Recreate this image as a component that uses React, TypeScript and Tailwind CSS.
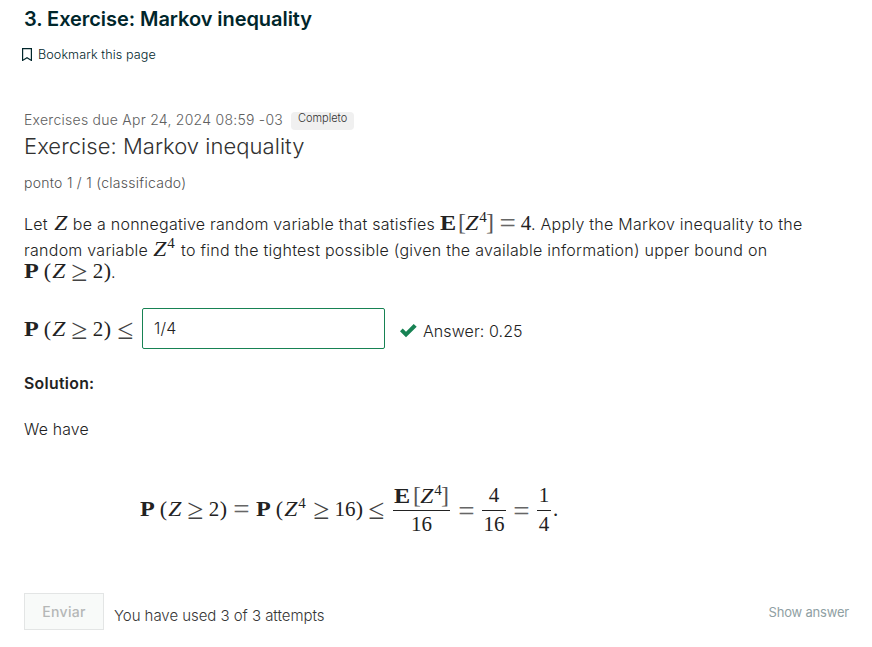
import type { ReactNode } from "react";

// One math glyph, centred in a box of fixed width and aligned on the baseline.
function G({ c, children }: { c: string; children: ReactNode }) {
  return (
    <span className={`inline-flex shrink-0 justify-center whitespace-nowrap ${c}`}>
      {children}
    </span>
  );
}

const serif = "font-['Liberation_Serif',serif] font-normal text-[#222] leading-none tracking-normal";
const Bold = ({ c }: { c: string }) => (
  <G c="w-[15px] text-[21px] font-bold"><span className="inline-block scale-x-[1.15]">{c}</span></G>
);
const Z = () => (
  <G c="w-[14px] text-[21px] italic"><span className="inline-block scale-x-[1.12]">Z</span></G>
);
const Rel = ({ c }: { c: string }) => <G c="w-[15px] text-[29px] leading-[16px] translate-y-[3px] text-[#444]">{c}</G>;
const Eq = () => <G c="w-[15px] text-[29px] leading-[16px] translate-y-[3px] text-[#666]">=</G>;
const Sup = () => <G c="w-[8px] text-[15px] leading-[12px] -translate-y-[8px]">4</G>;
const Paren = ({ c }: { c: string }) => <G c="w-[7px] text-[22px]">{c}</G>;

function PZ() {
  return (
    <span className={`inline-flex h-6 items-baseline ${serif}`}>
      <Bold c="P" />
      <span className="ml-[5px] inline-flex"><Paren c="(" /></span>
      <span className="ml-[1px] inline-flex"><Z /></span>
      <span className="ml-[6px] inline-flex"><Rel c="≥" /></span>
      <G c="ml-[6px] mr-[1px] w-[10px] text-[21px]">2</G>
      <Paren c=")" />
    </span>
  );
}

function EZ() {
  return (
    <span className={`inline-flex h-6 items-baseline ${serif}`}>
      <Bold c="E" />
      <G c="ml-1 w-[6px] text-[24px] text-[#555]">[</G>
      <Z />
      <Sup />
      <G c="w-[6px] text-[24px] text-[#555]">]</G>
    </span>
  );
}

function Fraction({ c, top, bottom }: { c: string; top: ReactNode; bottom: ReactNode }) {
  return (
    <span className={`flex shrink-0 flex-col items-center ${c}`}>
      <span className="flex h-[30px] items-center text-[21px]">{top}</span>
      <span className="h-px w-full bg-[#222]" />
      <span className="flex h-[26px] items-center text-[21px]">{bottom}</span>
    </span>
  );
}

export default function App() {
  return (
    <main className="flex h-[647px] w-[872px] flex-col overflow-hidden bg-white pl-6 font-['Inter',sans-serif] font-[350] text-[#222]">
      <h2 className="mt-[5px] h-7 text-[20px] leading-7 font-semibold tracking-[-0.06px] text-[#00262b]">
        3. Exercise: Markov inequality
      </h2>
      <div className="-ml-[2px] mt-[12px] flex h-5 items-center text-[12.6px] tracking-[0.09px] text-[#00262b]">
        <svg className="-mt-px" width="10" height="13" viewBox="0 0 10 13" fill="none" stroke="#00262b" strokeWidth="1.2">
          <path d="M.6.6h8.8v11.8L5 9.8.6 12.4z" />
        </svg>
        <span className="ml-[6px]">Bookmark this page</span>
      </div>

      <div className="mt-[44px] flex h-5 items-center text-[14px] tracking-[0.26px] text-[#606060]">
        <span>Exercises due Apr 24, 2024 08:59 -03</span>
        <span className="ml-2 mt-[3px] h-[18px] w-[63px] rounded bg-[#f0f0f0] text-center text-[11px] leading-[13px] tracking-normal text-[#333]">
          Completo
        </span>
      </div>
      <h3 className="mt-px h-8 text-[22px] leading-8 font-light tracking-[0.04px] text-[#313131]">
        Exercise: Markov inequality
      </h3>
      <div className="mt-[11px] h-5 text-[14px] leading-5 tracking-[0.27px] text-[#505050]">ponto 1 / 1 (classificado)</div>

      <p className="mt-[17px] flex h-6 items-baseline text-[16px] leading-6 tracking-[0.25px] whitespace-nowrap">
        <span>Let</span>
        <span className={`ml-[6px] ${serif}`}><Z /></span>
        <span className="ml-[5px]">be a nonnegative random variable that satisfies</span>
        <span className="ml-[5px]"><EZ /></span>
        <span className={`ml-[7px] inline-flex items-baseline ${serif}`}>
          <Eq />
          <G c="ml-[6px] w-[10px] text-[21px]">4</G>
        </span>
        <span>. Apply the Markov inequality to the</span>
      </p>
      <p className="mt-[4px] flex h-6 items-baseline text-[16px] leading-6 tracking-[0.26px] whitespace-nowrap">
        <span>random variable</span>
        <span className={`ml-[5px] inline-flex items-baseline ${serif}`}><Z /><Sup /></span>
        <span className="ml-[6px]">to find the tightest possible (given the available information) upper bound on</span>
      </p>
      <p className="-mt-[2px] flex h-6 items-baseline text-[16px] leading-6">
        <PZ />
        <span>.</span>
      </p>

      <div className="mt-[24px] flex h-[41px] items-center text-[16px]">
        <span className={`mt-[2px] inline-flex h-6 items-baseline ${serif}`}>
          <PZ />
          <span className="ml-[7px] inline-flex"><Rel c="≤" /></span>
        </span>
        <div className="ml-[9px] flex h-[41px] w-[243px] items-center rounded-[2px] border border-[#178253] pb-px pl-[11px] tracking-[0.25px] text-[#222]">
          1/4
        </div>
        <svg className="ml-[15px] mt-1" width="17" height="14" viewBox="0 0 17 14">
          <path fill="#178253" d="M0 7.2 2.7 4.5 6 7.8 13.7 0 16.7 2.8 6 13.2z" />
        </svg>
        <span className="ml-[6px] mt-[5px] tracking-[0.09px]">Answer: 0.25</span>
      </div>

      <strong className="mt-[23px] h-6 text-[15.8px] leading-6 font-semibold tracking-[0.3px]">Solution:</strong>
      <p className="mt-[22px] h-6 text-[15.8px] leading-6 tracking-[0.2px]">We have</p>

      <div className={`ml-[116px] mt-[41px] flex h-[51px] items-center ${serif}`}>
        <span className="mt-[3px] inline-flex h-6 shrink-0 items-baseline">
          <PZ />
          <span className="ml-[7px] inline-flex"><Eq /></span>
          <span className="ml-[7px] inline-flex"><Bold c="P" /></span>
          <span className="ml-[5px] inline-flex"><Paren c="(" /></span>
          <span className="ml-[1px] inline-flex"><Z /></span>
          <Sup />
          <span className="ml-[8px] inline-flex"><Rel c="≥" /></span>
          <G c="ml-[6px] mr-px w-[20px] text-[21px]">16</G>
          <Paren c=")" />
          <span className="ml-[6px] mr-px inline-flex"><Rel c="≤" /></span>
        </span>
        <Fraction c="ml-[8px] w-[57px]" top={<EZ />} bottom="16" />
        <span className="mt-[4px] ml-[9px]"><Eq /></span>
        <Fraction c="ml-[8px] w-[24px]" top="4" bottom="16" />
        <span className="mt-[4px] ml-[8px]"><Eq /></span>
        <Fraction c="ml-[8px] w-[14px]" top="1" bottom="4" />
        <span className="ml-[2px] mt-[2px] text-[21px]">.</span>
      </div>

      <footer className="mt-[59px] flex h-[38px] w-[825px] items-start">
        <button className="h-[37px] w-[80px] border border-[#e3e5e5] bg-[#f8faf9] text-[14px] font-medium tracking-[0.3px] text-[#b5b7b7]">
          Enviar
        </button>
        <span className="ml-[10px] mt-[12px] text-[15px] leading-[22px] tracking-[-0.04px] text-[#363636]">You have used 3 of 3 attempts</span>
        <span className="ml-auto mt-[9px] text-[13px] leading-5 font-normal tracking-[-0.2px] text-[#8fa0a3]">Show answer</span>
      </footer>
    </main>
  );
}
